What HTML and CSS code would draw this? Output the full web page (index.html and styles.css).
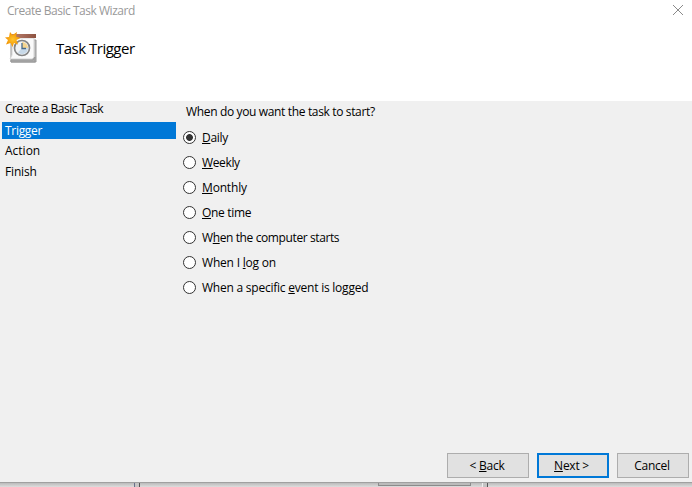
FILE: index.html
```html
<!DOCTYPE html>
<html lang="en">
<head>
<meta charset="utf-8">
<title>Create Basic Task Wizard</title>
<link rel="stylesheet" href="styles.css">
</head>
<body>
<main class="wizard">
  <header class="titlebar">
    <span class="caption">Create Basic Task Wizard</span>
    <svg class="close" width="12" height="12" viewBox="0 0 12 12"><path d="M1 1L11 11M11 1L1 11"/></svg>
  </header>
  <section class="banner">
    <svg class="task-icon" width="34" height="34" viewBox="0 0 34 34">
      <defs>
        <linearGradient id="bar" x1="0" x2="1"><stop offset="0" stop-color="#bd8170"/><stop offset="1" stop-color="#8d5341"/></linearGradient>
        <radialGradient id="sun"><stop offset="0" stop-color="#ffc52d"/><stop offset="1" stop-color="#f08f00"/></radialGradient>
      </defs>
      <path d="M6 9H31V31H6Z" fill="#bcbcbc" stroke="#999"/>
      <path d="M7 7H29V26L27 28H5L7 24Z" fill="#fafafa" stroke="#d5d5d5"/>
      <path d="M6 29H28L30 26V31H6Z" fill="#aaa" stroke="#999"/>
      <rect x="6" y="3" width="25" height="4" fill="url(#bar)"/>
      <circle cx="17" cy="17" r="7.500" fill="#f0f3f6" stroke="#858585" stroke-width="1.700"/>
      <path d="M17 11A6 6 0 0 1 23 17H17Z" fill="#f5d58f"/>
      <path d="M17 17H23A6 6 0 0 1 13 21.500Z" fill="#c8d9e8"/>
      <path d="M17 12V17.500H21" fill="none" stroke="#476b8b" stroke-width="1.300"/>
      <path d="M5 1L7.500 4L12 1L11 5.500L15.500 7L11.500 9L13 13.500L9 12L7.500 16L5.500 12L1 13.500L3 9L0 6.500L4 6Z" fill="url(#sun)"/>
    </svg>
    <h1>Task Trigger</h1>
  </section>
  <div class="content">
    <nav class="steps">
      <div class="step"><span class="s1">Create a Basic Task</span></div>
      <div class="step active"><span class="s2">Trigger</span></div>
      <div class="step"><span class="s3">Action</span></div>
      <div class="step"><span class="s4">Finish</span></div>
    </nav>
    <section class="options">
      <p><span class="q">When do you want the task to start?</span></p>
      <label><i class="radio checked"></i><span class="o1"><u>D</u>aily</span></label>
      <label><i class="radio"></i><span class="o2"><u>W</u>eekly</span></label>
      <label><i class="radio"></i><span class="o3"><u>M</u>onthly</span></label>
      <label><i class="radio"></i><span class="o4"><u>O</u>ne time</span></label>
      <label><i class="radio"></i><span class="o5">W<u>h</u>en the computer starts</span></label>
      <label><i class="radio"></i><span class="o6">When I <u>l</u>og on</span></label>
      <label><i class="radio"></i><span class="o7">When a specific <u>e</u>vent is logged</span></label>
    </section>
  </div>
  <footer class="actions">
    <button class="back"><span>&lt; <u>B</u>ack</span></button>
    <button class="next"><span><u>N</u>ext &gt;</span></button>
    <button class="cancel"><span>Cancel</span></button>
  </footer>
</main>
<div class="behind"><div class="behind-left"></div><div class="divider"></div><div class="behind-mid"><div class="behind-button"></div></div><div class="divider second"></div><div class="behind-right"></div></div>
</body>
</html>
```
FILE: styles.css
```css
* { box-sizing: border-box; }
body { margin: 0; width: 692px; height: 487px; overflow: hidden; background: #fff; color: #000; font: 12px/16px "Open Sans", "Noto Sans", sans-serif; }
.wizard { height: 483px; display: flex; flex-direction: column; border-bottom: 1px solid #a0a0a0; }
.titlebar { height: 28px; padding: 3px 8px 0 7px; display: flex; justify-content: space-between; color: #999; }
.caption { letter-spacing: -.47px; }
.close { margin-top: 1px; fill: none; stroke: #8a8a8a; stroke-width: 1; }
.banner { height: 73px; display: flex; padding: 3px 0 0 5px; }
.task-icon { flex: none; }
h1 { margin: 7px 0 0 17px; font-size: 15px; line-height: 21px; font-weight: 400; letter-spacing: -.5px; }
.content { height: 348px; background: #f0f0f0; display: flex; }
.steps { width: 176px; padding-left: 2px; }
.step { height: 17px; margin-bottom: 4px; padding-left: 3px; line-height: 15px; }
.active { background: #0078d7; color: #fff; line-height: 17px; }
.s1 { letter-spacing: -.47px; }
.s2 { letter-spacing: -.3px; }
.s4 { letter-spacing: -.17px; }
.options { padding-left: 7px; }
.options p { margin: 3px 0 5px 3px; }
.options label { height: 25px; display: flex; align-items: center; gap: 6px; white-space: nowrap; }
.q { letter-spacing: -.35px; }
.o1 { letter-spacing: -.3px; }
.o2 { letter-spacing: -.37px; }
.o3 { letter-spacing: -.17px; }
.o4 { letter-spacing: -.32px; }
.o5 { letter-spacing: -.39px; }
.o6 { letter-spacing: -.2px; }
.o7 { letter-spacing: -.23px; }
.radio { width: 13px; height: 13px; border: 1px solid #333; border-radius: 50%; background: #fff; }
.checked { background: radial-gradient(circle, #333 0 3px, #fff 3.8px); }
u { text-decoration: underline; text-decoration-thickness: 1px; text-underline-offset: 1px; text-decoration-skip-ink: none; }
.actions { flex: 1; background: #f0f0f0; display: flex; justify-content: flex-end; gap: 8px; padding: 4px 3px 0 0; }
button { height: 25px; width: 72px; padding: 0 2px 0 0; border: 1px solid #adadad; border-radius: 0; background: #e1e1e1; color: #000; font: inherit; letter-spacing: -.25px; }
.back { width: 82px; }
.next { border: 2px solid #0078d7; padding-right: 3px; }
.behind { height: 4px; display: flex; }
.behind-left { width: 134px; background: linear-gradient(#bbb, #ddd); }
.divider { width: 6px; border-left: 1px solid #69708a; border-right: 1px solid #555; background: #c4c4c4; }
.behind-mid { width: 342px; padding-left: 238px; background: linear-gradient(#bbb, #ddd); }
.behind-button { width: 93px; height: 3px; border: 1px solid #8b8b8b; border-top: 0; background: #bbb; }
.second { border-left-color: #eee; }
.behind-right { flex: 1; background: linear-gradient(#bbb, #ddd); }
```
